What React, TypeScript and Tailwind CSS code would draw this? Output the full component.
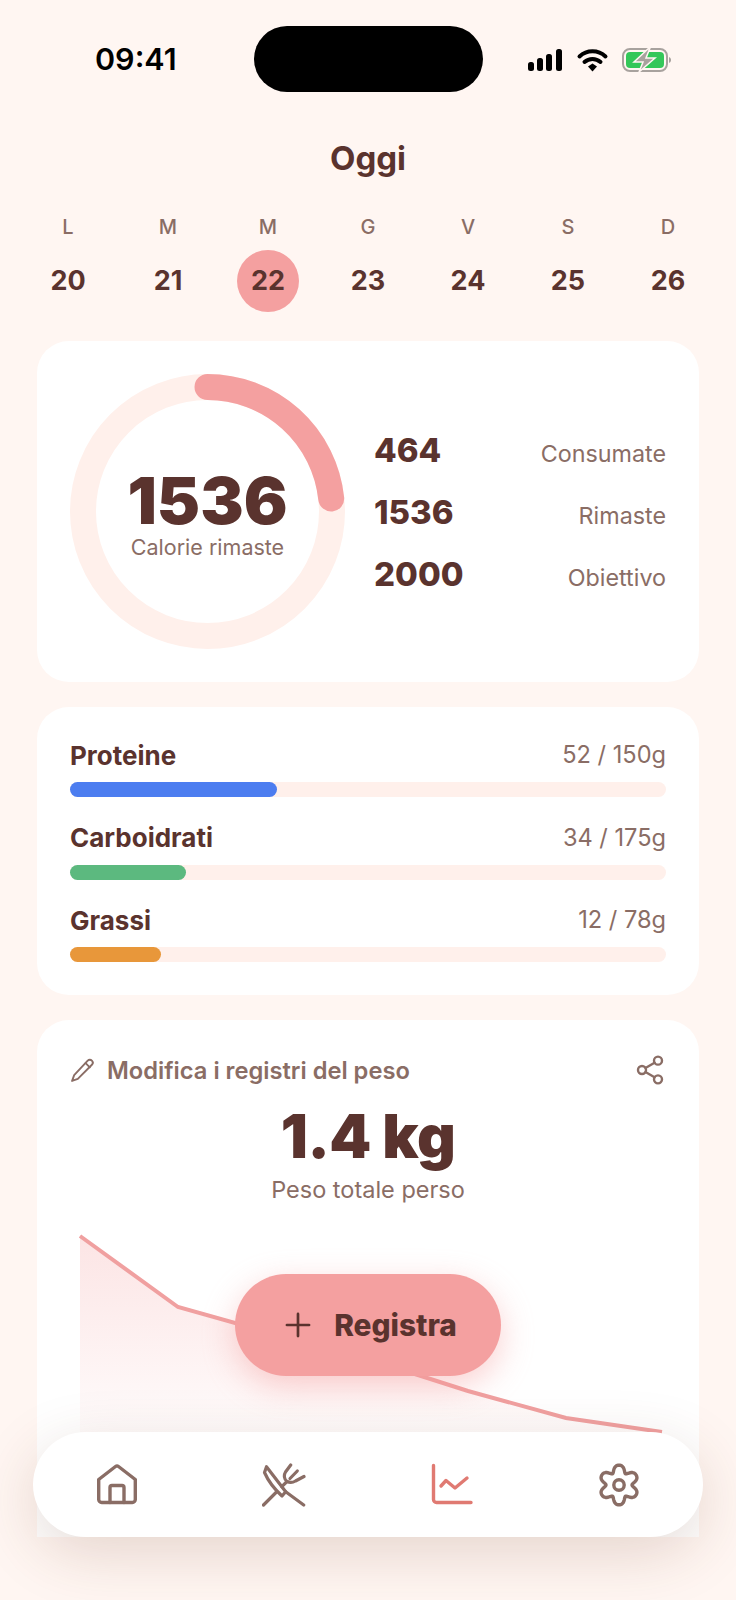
import { Plus } from "lucide-react";

const days = [
  { letter: "L", day: 20 },
  { letter: "M", day: 21 },
  { letter: "M", day: 22, active: true },
  { letter: "G", day: 23 },
  { letter: "V", day: 24 },
  { letter: "S", day: 25 },
  { letter: "D", day: 26 },
];

const stats = [
  { value: "464", label: "Consumate" },
  { value: "1536", label: "Rimaste" },
  { value: "2000", label: "Obiettivo" },
];

const macros = [
  { name: "Proteine", amount: "52 / 150g", width: "w-[207px]", color: "bg-[#4C7DF0]" },
  { name: "Carboidrati", amount: "34 / 175g", width: "w-[116px]", color: "bg-[#5CB97F]" },
  { name: "Grassi", amount: "12 / 78g", width: "w-[91px]", color: "bg-[#E8973A]" },
];

// rounded six-lobe cog outline, lobe pointing up
const cogPath =
  Array.from({ length: 144 }, (_, i) => {
    const a = (i / 144) * Math.PI * 2;
    const r = 17 + 3.4 * Math.cos(6 * a) - 0.6 * Math.cos(12 * a);
    const x = 22 + r * Math.sin(a);
    const y = 22 - r * Math.cos(a);
    return `${i === 0 ? "M" : "L"}${x.toFixed(2)} ${y.toFixed(2)}`;
  }).join("") + "z";

function StatusBar() {
  return (
    <div className="relative flex h-[66px] items-center justify-center">
      <span className="absolute left-[95px] font-['Inter'] text-[30.500px] leading-none font-semibold text-black">09:41</span>
      <div className="h-[66px] w-[229px] rounded-[33px] bg-black" />
      <svg className="absolute left-[527px] top-[22px]" width="144" height="24" viewBox="0 0 144 24" fill="none">
        <rect x="1" y="14" width="6" height="9" rx="2.5" fill="#000" />
        <rect x="10" y="10" width="6" height="13" rx="2.5" fill="#000" />
        <rect x="19" y="6" width="6" height="17" rx="2.5" fill="#000" />
        <rect x="29" y="1" width="6" height="22" rx="2.5" fill="#000" />
        <path d="M52.500 8.500a19 19 0 0 1 26 0" stroke="#000" strokeWidth="4" strokeLinecap="round" />
        <path d="M57.500 14a12 12 0 0 1 16 0" stroke="#000" strokeWidth="4" strokeLinecap="round" />
        <path d="M61 18.500 65.500 15.500l4.500 3-4.500 5z" fill="#000" />
        <rect x="96" y="1" width="44" height="22" rx="7" stroke="#A8A29E" strokeWidth="2" />
        <rect x="99" y="4" width="38" height="16" rx="4" fill="#34C759" />
        <path d="M142 9v6a3 3 0 0 0 2-3 3 3 0 0 0-2-3z" fill="#A8A29E" />
        <path d="M122 0 107 14h9l-4 10 16-14h-9l4-10z" fill="#A8A29E" stroke="#FFF6F2" strokeWidth="1.500" />
      </svg>
    </div>
  );
}

function WeekStrip() {
  return (
    <div className="grid grid-cols-7 px-[18px]">
      {days.map((d) => (
        <div key={d.day} className="flex flex-col items-center">
          <span className="mt-px font-['Inter'] text-[20px] leading-[24px] font-medium text-[#8A6D65]">{d.letter}</span>
          <span
            className={`mt-[11px] flex size-[62px] items-center justify-center rounded-full font-['Inter'] text-[27px] font-bold text-[#5A332E] ${
              d.active ? "bg-[#F4A0A0]" : ""
            }`}
          >
            <span>{d.day}</span>
          </span>
        </div>
      ))}
    </div>
  );
}

function CalorieCard() {
  return (
    <section className="flex h-[341px] items-center gap-[29px] rounded-[32px] bg-white p-[33px]">
      <div className="relative size-[275px] shrink-0">
        <svg width="275" height="275" viewBox="0 0 275 275" fill="none">
          <circle cx="137.500" cy="137.500" r="124.500" stroke="#FFF0EB" strokeWidth="26" />
          <path d="M137.500 13A124.500 124.500 0 0 1 261.200 124.500" stroke="#F4A0A0" strokeWidth="26" strokeLinecap="round" />
        </svg>
        <div className="absolute inset-0 flex flex-col items-center justify-center">
          <span className="mt-[5px] font-['Inter'] text-[65px] leading-[66px] font-black text-[#5A332E]">1536</span>
          <span className="font-['Inter'] text-[21.500px] leading-[26px] text-[#8A6D65]">Calorie rimaste</span>
        </div>
      </div>
      <div className="flex flex-1 flex-col gap-[20px]">
        {stats.map((s) => (
          <div key={s.label} className="flex h-[42px] items-center justify-between">
            <span className="mt-px font-['Inter'] text-[33px] leading-none font-extrabold text-[#5A332E]">{s.value}</span>
            <span className="mt-[8px] font-['Inter'] text-[23.300px] leading-none text-[#8A6D65]">{s.label}</span>
          </div>
        ))}
      </div>
    </section>
  );
}

function MacroCard() {
  return (
    <section className="mt-[25px] flex flex-col gap-[25.500px] rounded-[32px] bg-white px-[33px] pt-[33px] pb-[33px]">
      {macros.map((m) => (
        <div key={m.name}>
          <div className="flex h-[30px] items-center justify-between">
            <span className="font-['Inter'] text-[26px] font-bold text-[#5A332E]">{m.name}</span>
            <span className="font-['Inter'] text-[23.600px] text-[#8A6D65]">{m.amount}</span>
          </div>
          <div className="mt-3 h-[15px] rounded-full bg-[#FFF0EB]">
            <div className={`h-full rounded-full ${m.width} ${m.color}`} />
          </div>
        </div>
      ))}
    </section>
  );
}

function WeightCard() {
  return (
    <section className="mt-[25px] h-[517px] rounded-t-[32px] bg-white pt-[35px]">
      <div className="flex h-[30px] items-center justify-between px-[33px]">
        <div className="flex items-center gap-[12px]">
          <svg width="25" height="25" viewBox="0 0 24 24" fill="none" stroke="#8A6D65" strokeWidth="1.800" strokeLinecap="round" strokeLinejoin="round">
            <path d="M17 2.500a2.800 2.800 0 0 1 4 4L7.500 20 2 22l2-5.500z" />
            <path d="m15 5 4 4" />
          </svg>
          <span className="mt-px font-['Inter'] text-[23.700px] font-semibold text-[#8A6D65]">Modifica i registri del peso</span>
        </div>
        <svg width="32" height="32" viewBox="0 0 24 24" fill="none" stroke="#8A6D65" strokeWidth="1.800" strokeLinecap="round" strokeLinejoin="round">
          <circle cx="18" cy="5" r="3" />
          <circle cx="6" cy="12" r="3" />
          <circle cx="18" cy="19" r="3" />
          <path d="m8.600 13.500 6.800 4M15.400 6.500l-6.800 4" />
        </svg>
      </div>
      <div className="mt-[16px] text-center font-['Inter'] text-[60px] leading-[70px] font-black tracking-[-0.5px] text-[#5A332E]">1.4 kg</div>
      <div className="mt-[4px] text-center font-['Inter'] text-[23.500px] leading-[30px] text-[#8A6D65]">Peso totale perso</div>
      <svg className="mt-[25px] block" width="662" height="307" viewBox="37 1230 662 307" fill="none">
        <defs>
          <linearGradient id="weightFill" x1="0" y1="0" x2="0" y2="1">
            <stop offset="0" stopColor="#F4A0A0" stopOpacity="0.28" />
            <stop offset="0.75" stopColor="#F4A0A0" stopOpacity="0" />
          </linearGradient>
        </defs>
        <path d="M80 1236 178 1307 274 1334 371 1360 468 1391 566 1418 662 1432V1537H80z" fill="url(#weightFill)" />
        <path d="M80 1236 178 1307 274 1334 371 1360 468 1391 566 1418 662 1432" stroke="#F0A0A0" strokeWidth="4" />
      </svg>
    </section>
  );
}

function BottomNav() {
  return (
    <nav className="absolute left-[33px] top-[1432px] grid h-[105px] w-[670px] grid-cols-4 items-center rounded-[53px] bg-white text-[#8A6D65] shadow-[0_16px_60px_rgba(110,60,40,0.18)]">
      <div className="flex justify-center">
        <svg width="44" height="44" viewBox="0 0 44 44" fill="none" stroke="currentColor" strokeWidth="3.400" strokeLinecap="round" strokeLinejoin="round">
          <path d="M3.700 16.500 20.500 3.500a2.500 2.500 0 0 1 3 0L40.300 16.500V36.500a3 3 0 0 1-3 3H6.700a3 3 0 0 1-3-3z" />
          <path d="M15 39.500V24.500a2 2 0 0 1 2-2h10a2 2 0 0 1 2 2v15" />
        </svg>
      </div>
      <div className="flex justify-center">
        <svg width="44" height="44" viewBox="0 0 44 44" fill="none" stroke="currentColor" strokeWidth="3.200" strokeLinecap="round" strokeLinejoin="round">
          <path d="M4.500 3.700 23.700 28.700 20 33Q8 22 2.500 9.500z" />
          <path d="M23.700 28.700 41.700 42" />
          <path d="M1.500 42 14.500 29M19.800 23.700 25 18.500" />
          <path d="M28.700 2 23.500 9c-1.800 3-1.500 7.500 1.500 9.500 3 1.500 6 1 8.500-.5L42 13.500" />
          <path d="M35.300 8 28 15.500" />
        </svg>
      </div>
      <div className="flex justify-center text-[#E07A72]">
        <svg width="44" height="44" viewBox="0 0 44 44" fill="none" stroke="currentColor" strokeWidth="3.400" strokeLinecap="round" strokeLinejoin="round">
          <path d="M3.500 2.500V36.500a3 3 0 0 0 3 3H41" />
          <path d="M11 23 16 17.500 25 25 37 15" />
        </svg>
      </div>
      <div className="flex justify-center">
        <svg width="44" height="44" viewBox="0 0 44 44" fill="none" stroke="currentColor" strokeWidth="3.400" strokeLinejoin="round">
          <path d={cogPath} />
          <circle cx="22" cy="22" r="5.200" />
        </svg>
      </div>
    </nav>
  );
}

export default function App() {
  return (
    <div className="relative h-[1600px] w-[736px] overflow-hidden bg-[#FFF6F2]">
      <div className="pt-[26px]">
        <StatusBar />
      </div>
      <h1 className="mt-[46px] text-center font-['Inter'] text-[33px] leading-[40px] font-bold text-[#5A332E]">Oggi</h1>
      <div className="mt-[36px]">
        <WeekStrip />
      </div>
      <div className="mt-[29px] px-[37px]">
        <CalorieCard />
        <MacroCard />
        <WeightCard />
      </div>
      <button
        type="button"
        className="absolute left-[235px] top-[1274px] flex h-[102px] w-[266px] items-center justify-center gap-[17px] rounded-[51px] bg-[#F4A0A0] font-['Inter'] text-[29.800px] font-extrabold text-[#5A332E] shadow-[0_10px_32px_rgba(244,150,150,0.45)]"
      >
        <Plus size={38} strokeWidth={1.700} />
        Registra
      </button>
      <BottomNav />
    </div>
  );
}
